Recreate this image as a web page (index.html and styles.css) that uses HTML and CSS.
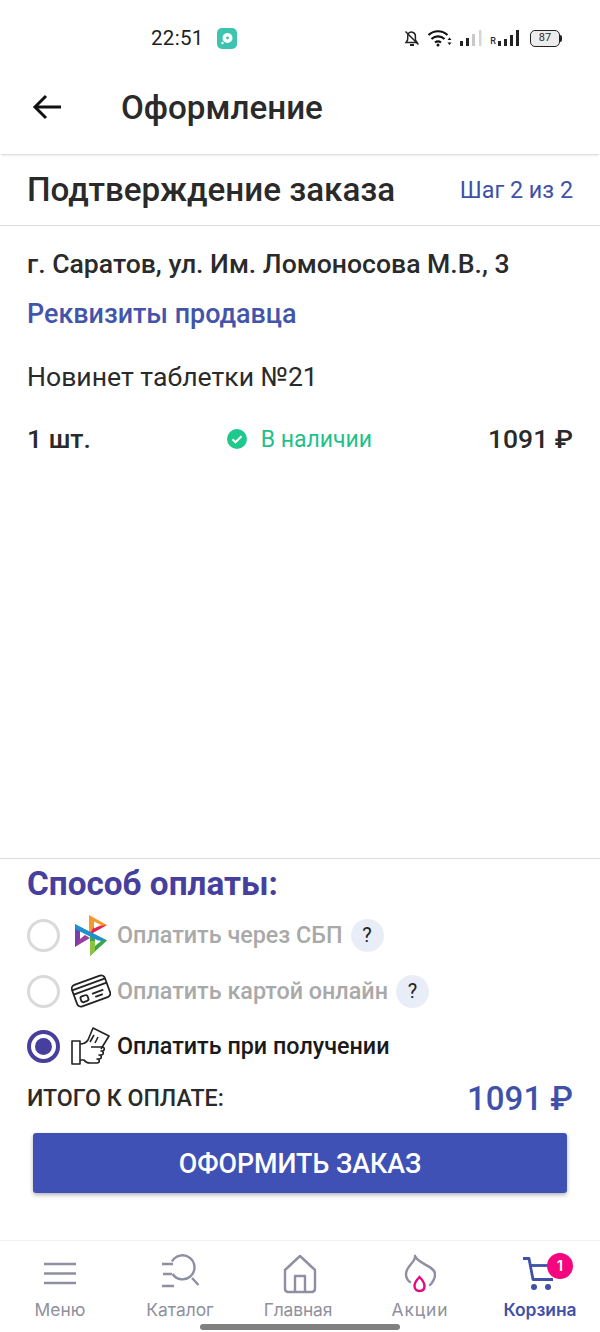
FILE: index.html
```html
<!DOCTYPE html>
<html lang="ru">
<head>
<meta charset="utf-8">
<title>Оформление</title>
<link rel="stylesheet" href="styles.css">
</head>
<body>
<div class="phone">
  <div class="status">
    <span class="time">22:51</span>
    <svg class="app-dot" width="20" height="21" viewBox="0 0 20 21"><rect width="20" height="21" rx="5" fill="#3cc4ae"/><circle cx="10.5" cy="10" r="5" fill="#fff"/><circle cx="10.5" cy="10" r="1.4" fill="#3cc4ae"/><circle cx="5.5" cy="15" r="1.2" fill="#fff"/></svg>
    <div class="status-right">
      <svg width="16" height="18" viewBox="0 0 16 18" fill="none" stroke="#222" stroke-width="1.5"><path d="M2 13.5h11l-1.600-2.500V7a4 4 0 0 0-7.500-1.800L3.600 11z"/><path d="M6 16h4" stroke-width="2"/><path d="M1.500 2.500l13 13"/></svg>
      <svg class="wifi" width="24" height="18" viewBox="0 0 24 18" fill="none" stroke="#111" stroke-width="2.200"><path d="M0.500 6c5.500-5 13.500-5 19 0"/><path d="M3.500 10c3.800-3.400 9.200-3.400 13 0"/><path d="M7 13.500c2-1.600 4-1.600 6 0"/><circle cx="10" cy="16" r="1.500" fill="#111" stroke="none"/><path d="M21.500 8.500l-2 2.500h4zM21.500 16l-2-2.500h4z" fill="#111" stroke="none"/></svg>
      <svg width="22" height="18" viewBox="0 0 22 18"><rect x="0" y="12" width="3" height="5" fill="#222"/><rect x="6" y="9" width="3" height="8" fill="#222"/><rect x="12" y="5" width="3" height="12" fill="#c9c9c9"/><rect x="19" y="1" width="2.500" height="16" fill="#d6d6d6"/></svg>
      <div class="sim"><span class="r">R</span>
      <svg width="22" height="18" viewBox="0 0 22 18"><rect x="0" y="12" width="3" height="5" fill="#222"/><rect x="6" y="10" width="3" height="7" fill="#222"/><rect x="12" y="6" width="3" height="11" fill="#222"/><rect x="18" y="1" width="3" height="16" fill="#222"/></svg></div>
      <div class="battery"><div class="battery-body">87</div><div class="battery-tip"></div></div>
    </div>
  </div>

  <header class="appbar">
    <svg class="back" width="30" height="26" viewBox="0 0 30 26" fill="none" stroke="#111" stroke-width="3"><path d="M29 13H3"/><path d="M14 2L3 13l11 11"/></svg>
    <h1 class="appbar-title">Оформление</h1>
  </header>

  <div class="step-head">
    <h2 class="step-title">Подтверждение заказа</h2>
    <span class="step-count">Шаг 2 из 2</span>
  </div>

  <main class="content">
    <p class="address">г. Саратов, ул. Им. Ломоносова М.В., 3</p>
    <a class="seller">Реквизиты продавца</a>
    <p class="product">Новинет таблетки №21</p>
    <div class="item-row">
      <span class="qty">1 шт.</span>
      <span class="avail">
        <svg width="20" height="20" viewBox="0 0 20 20"><circle cx="10" cy="10" r="10" fill="#1fc98e"/><path d="M5.500 10.300l3 3 6-6" fill="none" stroke="#fff" stroke-width="2.200"/></svg>
        В наличии
      </span>
      <span class="item-price">1091 ₽</span>
    </div>
  </main>

  <section class="payment">
    <h3 class="pay-title">Способ оплаты:</h3>
    <div class="pay-row muted sbp-row">
      <span class="radio"></span>
      <svg class="pay-icon" width="33" height="41" viewBox="5 4 33 41">
        <polygon points="19,4 37,14 19,24" fill="#f29a2e"/>
        <polygon points="37,14 19,24 24,16" fill="#e0225f"/>
        <polygon points="24,10.500 31,14 24,17.500" fill="#fff"/>
        <polygon points="20,21 37,29.500 20,45" fill="#3da648"/>
        <polygon points="20,45 20,30 25,30 25,40" fill="#8bc53f"/>
        <polygon points="25,27 31,30 25,35" fill="#fff"/>
        <polygon points="5,13 5,36 10,32 10,18" fill="#7b3fa8"/>
        <polygon points="5,36 20,27 15,24 10,28" fill="#9a3fa0"/>
        <polygon points="5,13 37,29.500 28,29.500 5,18" fill="#1f8fd0"/>
      </svg>
      <span class="pay-label">Оплатить через СБП</span>
      <span class="help">?</span>
    </div>
    <div class="pay-row muted card-row">
      <span class="radio"></span>
      <svg class="pay-icon" width="40" height="34" viewBox="0 0 40 34" fill="none" stroke="#222" stroke-width="1.800" stroke-linejoin="round">
        <g transform="rotate(-20 20 17)">
          <rect x="2.500" y="5.500" width="35" height="23" rx="4"/>
          <path d="M2.500 10h35M2.500 14.500h35"/>
          <rect x="7.500" y="19" width="7.500" height="6" rx="2"/>
          <path d="M20 20h12M22 24h8"/>
        </g>
      </svg>
      <span class="pay-label">Оплатить картой онлайн</span>
      <span class="help">?</span>
    </div>
    <div class="pay-row cash-row">
      <span class="radio checked"></span>
      <svg class="pay-icon" width="40" height="38" viewBox="0 0 40 38" fill="none" stroke="#222" stroke-width="1.600" stroke-linejoin="round">
        <rect x="1" y="14" width="8" height="23"/>
        <path d="M9 17c4 0 6-1 8-4l5-12 16 8-8 13"/>
        <path d="M23 8l-4 7M27 10l-3 6"/>
        <path d="M9 33h4c2 3 4 3 6 3h7c3 0 3-4 0-4h2c3 0 3-4 0-4h2c3 0 3-4 0-4h1c3 0 3-4 0-4H20"/>
      </svg>
      <span class="pay-label">Оплатить при получении</span>
    </div>
    <div class="total-row">
      <span class="total-label">ИТОГО К ОПЛАТЕ:</span>
      <span class="total-sum">1091 ₽</span>
    </div>
    <button class="submit"><span class="submit-text">ОФОРМИТЬ ЗАКАЗ</span></button>
  </section>

  <nav class="tabs">
    <div class="tab">
      <svg width="36" height="42" viewBox="0 0 36 42" fill="none" stroke="#8f8fa3" stroke-width="2.500"><path d="M2 12h32M2 21.500h32M2 31h32"/></svg>
      <span>Меню</span>
    </div>
    <div class="tab">
      <svg width="40" height="42" viewBox="0 0 40 42" fill="none" stroke="#8f8fa3" stroke-width="2.400"><path d="M12 9.500A12 12 0 1 1 12.500 22"/><path d="M32 26l6.500 7M2 12h11M3 22h9M2 34h12"/></svg>
      <span>Каталог</span>
    </div>
    <div class="tab">
      <svg width="34" height="42" viewBox="0 0 34 42" fill="none" stroke="#8f8fa3" stroke-width="2.400" stroke-linejoin="round"><path d="M2 18L17 4l15 14v18.500c0 2-1.500 3.500-3.500 3.500h-23C3.500 40 2 38.500 2 36.500z"/><path d="M12 40V24h10v16"/></svg>
      <span class="label-home">Главная</span>
    </div>
    <div class="tab">
      <svg width="32" height="42" viewBox="0 0 32 42" fill="none" stroke-width="2.400" stroke-linecap="round"><path d="M11 4C14 12 31 14 31 22c0 4-2 8-5 11M11 4C12 10 2 14 2 22c0 4 1 6 4 8" stroke="#8f8fa3"/><path d="M15.500 25c3 3 5 6 5 9 0 3-2 5-5 5s-5-2-5-5c0-3 2-6 5-9z" stroke="#e6097b" stroke-width="2.400"/></svg>
      <span class="label-sale">Акции</span>
    </div>
    <div class="tab active">
      <svg width="36" height="42" viewBox="0 0 36 42" fill="none" stroke="#3f51a8" stroke-width="2.800" stroke-linejoin="round"><path d="M1 6.500h6l4 21h20"/><path d="M8 13.500h22"/><circle cx="12" cy="35" r="3" fill="#3f51a8" stroke="none"/><circle cx="26" cy="35" r="3" fill="#3f51a8" stroke="none"/></svg>
      <span class="badge">1</span>
      <span>Корзина</span>
    </div>
    <div class="home-bar"></div>
  </nav>
</div>
</body>
</html>
```
FILE: styles.css
```css
* { box-sizing: border-box; }
html, body { margin: 0; padding: 0; background: #fff; }
body { font-family: Roboto, "Liberation Sans", sans-serif; color: #2a2a2a; }
h1, h2, h3, p { margin: 0; font-weight: 500; }

.phone { width: 600px; height: 1332px; display: flex; flex-direction: column; overflow: hidden; }

.status { height: 64px; padding: 12px 38px 0 151px; display: flex; align-items: center; flex: none; }
.time { font-size: 20.500px; letter-spacing: .3px; color: #1e1e1e; width: 66px; }
.status-right { margin-left: auto; display: flex; align-items: center; gap: 8px; }
.sim { display: flex; align-items: flex-end; gap: 2px; }
.r { font-size: 9px; font-weight: 500; line-height: 11px; }
.battery { display: flex; align-items: center; margin-left: 2px; }
.battery-body { width: 30px; height: 17px; border: 1.500px solid #222; border-radius: 5px; background: #ececec; font-size: 11px; line-height: 14px; text-align: center; }
.battery-tip { width: 2px; height: 7px; background: #222; border-radius: 0 2px 2px 0; }

.appbar { height: 90px; flex: none; display: flex; align-items: center; padding: 0 0 4px 32px; box-shadow: 0 2px 2px -1px rgba(0,0,0,.18); position: relative; }
.appbar-title { font-size: 33.200px; margin-left: 59px; color: #2a2a2a; }
.back { flex: none; }

.step-head { height: 72px; flex: none; display: flex; align-items: center; justify-content: space-between; padding: 0 27px; border-bottom: 1px solid #dcdcdc; }
.step-title { font-size: 33.200px; }
.step-count { font-size: 23.300px; color: #3f51a8; }

.content { flex: 1; padding: 24px 27px 0; }
.address { font-size: 26.600px; line-height: 28px; }
.seller { display: block; margin-top: 22px; font-size: 26.900px; line-height: 29px; font-weight: 500; color: #4354ab; }
.product { margin-top: 33px; font-size: 26.600px; line-height: 29px; font-weight: 400; }
.item-row { margin-top: 34px; display: flex; align-items: center; justify-content: space-between; }
.qty, .item-price { font-size: 26.500px; font-weight: 500; line-height: 28px; }
.avail { display: flex; align-items: center; gap: 14px; font-size: 23px; color: #1fc18a; margin-left: 20px; }

.payment { flex: none; height: 382px; border-top: 1px solid #dcdcdc; padding: 6px 27px 0; }
.pay-title { font-size: 33.300px; line-height: 38px; font-weight: 700; color: #473f9e; }
.pay-row { display: flex; align-items: center; height: 36px; font-size: 23.350px; font-weight: 500; color: #1a1a1a; }
.sbp-row { margin-top: 14px; }
.card-row { margin-top: 20px; }
.cash-row { margin-top: 19px; }
.pay-row.muted { color: #a9a9a9; }
.radio { width: 33px; height: 33px; border-radius: 50%; border: 3px solid #dadada; flex: none; }
.radio.checked { border: 4px solid #473f9e; position: relative; }
.radio.checked::after { content: ""; position: absolute; inset: 4px; border-radius: 50%; background: #473f9e; }
.pay-icon { flex: none; margin-left: 11px; margin-right: 6px; }
.sbp-row .pay-icon { margin-left: 15px; margin-right: 9px; }
.help { width: 33px; height: 33px; border-radius: 50%; background: #e9edf8; color: #222; display: flex; align-items: center; justify-content: center; font-size: 20px; font-weight: 400; margin-left: 8px; }

.total-row { display: flex; justify-content: space-between; align-items: center; height: 44px; margin-top: 12px; }
.total-label { font-size: 23.200px; font-weight: 500; color: #2a2a2a; }
.total-sum { font-size: 33px; font-weight: 500; color: #3f51a8; }
.submit { display: block; width: 534px; height: 60px; margin: 13px 0 0 6px; padding: 2px 0 0; border: 0; border-radius: 3px; background: #3f51b5; color: #fff; font-family: inherit; font-size: 26.800px; font-weight: 500; box-shadow: 0 2px 4px rgba(0,0,0,.3); }

.tabs { flex: none; height: 92px; display: flex; padding: 11px 0 0; border-top: 1px solid #f0f0f0; position: relative; }
.tab { flex: 1; display: flex; flex-direction: column; align-items: center; justify-content: flex-start; position: relative; font-family: Inter, Lato, sans-serif; font-size: 17.400px; color: #8f8f9d; }
.tab svg { flex: none; }
.tab span { line-height: 20px; margin-top: 6px; }
.tab .label-home { letter-spacing: -.1px; margin-right: 4px; }
.tab .label-sale { letter-spacing: .9px; }
.tab.active { color: #3f51a8; font-weight: 600; }
.tab .badge { position: absolute; top: 1px; left: 67px; width: 26px; height: 26px; margin: 0; border-radius: 50%; background: #f5067f; color: #fff; font-size: 15px; line-height: 26px; text-align: center; font-weight: 600; }
.home-bar { position: absolute; left: 200px; bottom: 2px; width: 200px; height: 6px; border-radius: 3px; background: #808080; }
```
